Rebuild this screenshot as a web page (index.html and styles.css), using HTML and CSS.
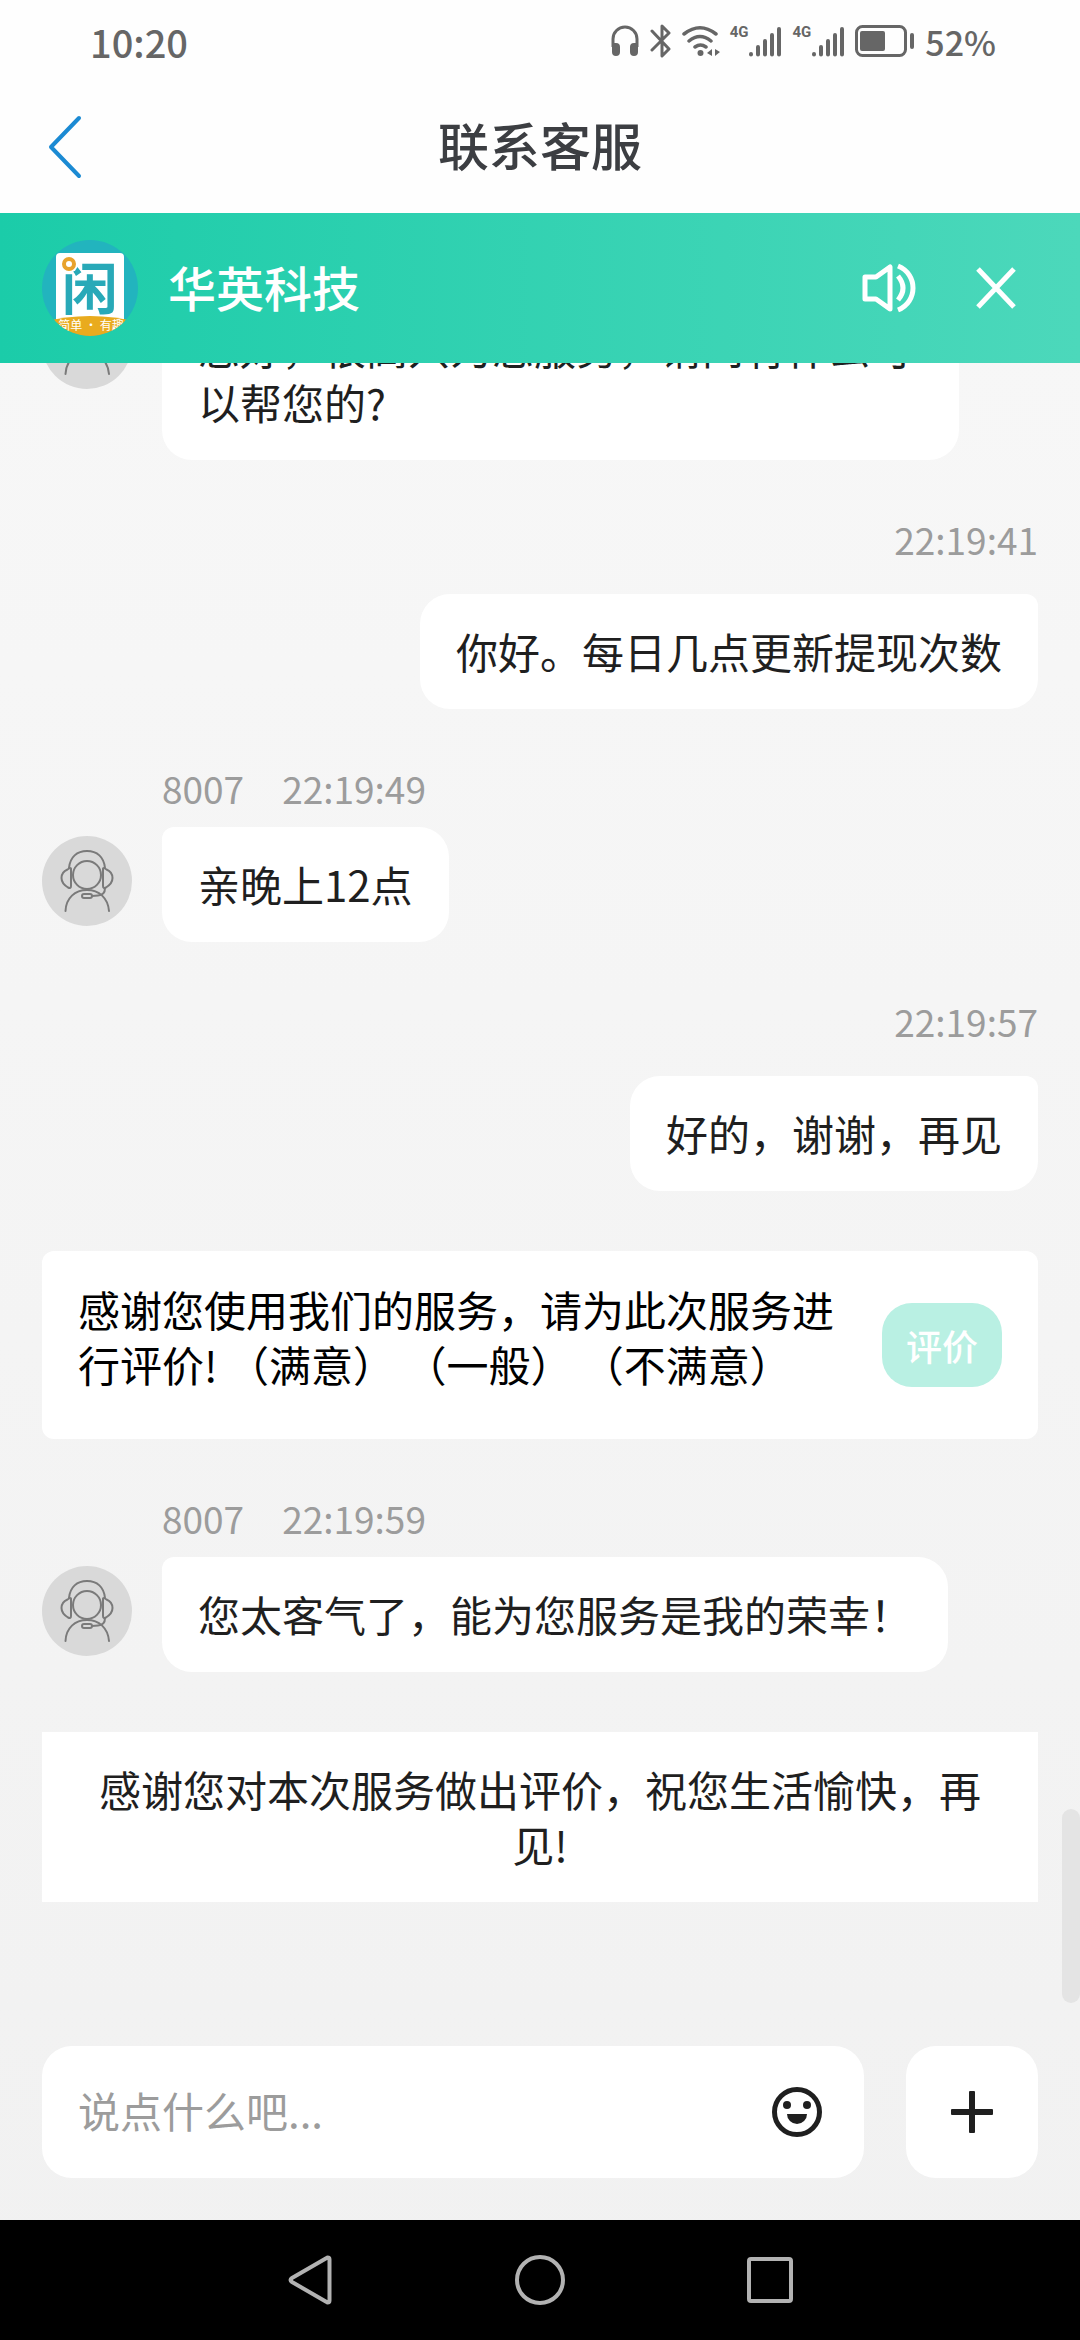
FILE: index.html
```html
<!DOCTYPE html>
<html lang="zh-CN">
<head>
<meta charset="utf-8">
<meta name="viewport" content="width=device-width, initial-scale=1">
<title>联系客服</title>
<link rel="stylesheet" href="styles.css">
</head>
<body>
<svg class="symbols" aria-hidden="true">
  <symbol id="agent" viewBox="0 0 90 90">
    <circle cx="45" cy="45" r="45" fill="#d9d9d9"/>
    <g fill="none" stroke="#7a7a7a" stroke-width="2" stroke-linecap="round" stroke-linejoin="round">
      <circle cx="45" cy="39" r="14"/>
      <path d="M27 32C28 21 35 15 45 15s17 6 18 17"/>
      <path d="M29 33v17q0 3-3 1.500C22 49 19.500 46 19.500 42S22 35 25.500 33.500Q29 31 29 33z"/>
      <path d="M61 33v17q0 3 3 1.500C68 49 70.500 46 70.500 42S68 35 64.500 33.500Q61 31 61 33z"/>
      <path d="M63 52q0 7-7 7.500L50 60"/>
      <rect x="40" y="58" width="10" height="4" rx="2"/>
      <path d="M23.500 75C24 62 33 54 45 54s21 8 22 21"/>
    </g>
  </symbol>
  <symbol id="bars" viewBox="0 0 34 32">
    <path d="M3 29v.5M10 22v7.500M17 16v13.500M24 10v19.500M31 4v25.500" fill="none" stroke="#666" stroke-width="4" stroke-linecap="round"/>
  </symbol>
</svg>

<div class="screen">
  <div class="status">
    <span class="clock">10:20</span>
    <div class="status-icons">
      <svg width="30" height="32" viewBox="0 0 28 32" fill="none" stroke="#666">
        <path d="M2 22V14a12 12 0 0 1 24 0v8" stroke-width="3"/>
        <path d="M1 18h4a4 4 0 0 1 4 4v5a4 4 0 0 1-8 0zM27 18h-4a4 4 0 0 0-4 4v5a4 4 0 0 0 8 0z" fill="#666" stroke="none"/>
      </svg>
      <svg width="22" height="34" viewBox="0 0 22 34" fill="none" stroke="#666" stroke-width="3" stroke-linecap="round" stroke-linejoin="round">
        <path d="M2 7l17 18-7 7V2l7 7L2 26"/>
      </svg>
      <svg width="38" height="32" viewBox="0 0 38 32" fill="none" stroke="#666" stroke-width="3.500" stroke-linecap="round">
        <path d="M2 9q16-12.500 32 0M7 16q11-9 22 0M13 22q5.500-4 11 0"/>
        <circle cx="18.500" cy="28" r="3" fill="#666" stroke="none"/>
        <path d="M30 24v7l-5-3zM33 24v7l5-4z" fill="#666" stroke="none"/>
      </svg>
      <div class="signal"><span>4G</span><svg width="34" height="32"><use href="#bars"/></svg></div>
      <div class="signal"><span>4G</span><svg width="34" height="32"><use href="#bars"/></svg></div>
      <svg width="60" height="32" viewBox="0 0 60 32">
        <rect x="1.500" y="1.500" width="49" height="29" rx="6" fill="none" stroke="#666" stroke-width="3"/>
        <rect x="5" y="6" width="25" height="20" rx="2" fill="#666"/>
        <rect x="55" y="8" width="4" height="16" rx="2" fill="#666"/>
      </svg>
      <span class="percent">52%</span>
    </div>
  </div>

  <header class="title-bar">
    <button class="icon-button" type="button" aria-label="返回">
      <svg width="34" height="64" viewBox="0 0 34 64" fill="none" stroke="#1b8ad3" stroke-width="4" stroke-linecap="round" stroke-linejoin="round"><path d="M31 3L3 32l28 29"/></svg>
    </button>
    <h1>联系客服</h1>
  </header>

  <section class="brand">
    <svg class="logo" width="96" height="96" viewBox="0 0 96 96" role="img" aria-label="闲">
      <clipPath id="disc"><circle cx="48" cy="48" r="48"/></clipPath>
      <g clip-path="url(#disc)">
        <rect width="96" height="96" fill="#22b4be"/>
        <rect x="14" y="13" width="68" height="70" rx="4" fill="#fff"/>
        <text class="logo-char" x="48" y="69" text-anchor="middle">闲</text>
        <circle cx="27" cy="24" r="9" fill="#fff"/>
        <circle cx="27" cy="24" r="5" fill="none" stroke="#e8a22c" stroke-width="4"/>
        <path d="M0 82Q48 70 96 82V96H0z" fill="#e9ab1e"/>
        <text class="logo-tag" x="49" y="90" text-anchor="middle">简单 · 有趣</text>
      </g>
    </svg>
    <h2>华英科技</h2>
    <button class="icon-button" type="button" aria-label="声音">
      <svg width="54" height="50" viewBox="0 0 54 50" fill="none" stroke="#fff" stroke-width="5" stroke-linejoin="round">
        <path d="M3 14h11L28 4v42L14 36H3z"/>
        <path d="M36 13q10 12 0 24M36 3c20 8 20 36 0 44"/>
      </svg>
    </button>
    <button class="icon-button" type="button" aria-label="关闭">
      <svg width="40" height="42" viewBox="0 0 40 42" fill="none" stroke="#fff" stroke-width="5"><path d="M2 2l36 38M38 2L2 40"/></svg>
    </button>
  </section>

  <main class="chat">
    <article class="message received">
      <p class="meta"><span>8007</span><time>22:19:37</time></p>
      <svg class="avatar" width="90" height="90"><use href="#agent"/></svg>
      <p class="bubble">您好，很高兴为您服务，请问有什么可以帮您的?</p>
    </article>
    <article class="message sent">
      <p class="meta"><time>22:19:41</time></p>
      <p class="bubble">你好。每日几点更新提现次数</p>
    </article>
    <article class="message received">
      <p class="meta"><span>8007</span><time>22:19:49</time></p>
      <svg class="avatar" width="90" height="90"><use href="#agent"/></svg>
      <p class="bubble">亲晚上12点</p>
    </article>
    <article class="message sent">
      <p class="meta"><time>22:19:57</time></p>
      <p class="bubble">好的，谢谢，再见</p>
    </article>
    <section class="rating">
      <p>感谢您使用我们的服务，请为此次服务进行评价! （满意） （一般） （不满意）</p>
      <button class="rate-button" type="button">评价</button>
    </section>
    <article class="message received">
      <p class="meta"><span>8007</span><time>22:19:59</time></p>
      <svg class="avatar" width="90" height="90"><use href="#agent"/></svg>
      <p class="bubble">您太客气了，能为您服务是我的荣幸！</p>
    </article>
    <p class="notice">感谢您对本次服务做出评价，祝您生活愉快，再见!</p>
    <div class="scroll-thumb"></div>
  </main>

  <form class="composer">
    <div class="field">
      <input type="text" placeholder="说点什么吧..." aria-label="说点什么吧">
      <button class="icon-button" type="button" aria-label="表情">
        <svg width="50" height="50" viewBox="0 0 50 50" fill="#1f1f1f">
          <circle cx="25" cy="25" r="22.500" fill="none" stroke="#1f1f1f" stroke-width="5"/>
          <circle cx="15" cy="18" r="4"/><circle cx="35" cy="18" r="4"/>
          <path d="M15 27h20a10 10 0 0 1-20 0z"/>
        </svg>
      </button>
    </div>
    <button class="add" type="button" aria-label="更多">
      <svg width="42" height="42" viewBox="0 0 42 42" fill="#1f1f1f"><rect x="18" width="6" height="42" rx="1"/><rect y="18" width="42" height="6" rx="1"/></svg>
    </button>
  </form>

  <nav class="system-nav">
    <button class="icon-button" type="button" aria-label="返回键"><svg width="44" height="50" viewBox="0 0 44 50"><path d="M39.500 2.500q2 0 2 2v41q0 2-2 2L4 27Q1 25 4 23z"/></svg></button>
    <button class="icon-button" type="button" aria-label="主屏幕"><svg width="50" height="50" viewBox="0 0 50 50"><circle cx="25" cy="25" r="23"/></svg></button>
    <button class="icon-button" type="button" aria-label="最近任务"><svg width="46" height="46" viewBox="0 0 46 46"><rect x="2" y="2" width="42" height="42" rx="2"/></svg></button>
  </nav>
</div>
</body>
</html>
```
FILE: styles.css
```css
* {
  box-sizing: border-box;
  margin: 0;
  padding: 0;
}

body {
  font-family: "Noto Sans CJK SC", "Noto Sans", sans-serif;
  font-size: 42px;
  line-height: 55px;
  color: #1f1f1f;
}

button,
input {
  border: 0;
  background: none;
  font: inherit;
  color: inherit;
}

svg {
  display: block;
  flex: none;
}

.symbols {
  position: absolute;
  width: 0;
  height: 0;
}

.screen {
  display: flex;
  flex-direction: column;
  height: 100vh;
  background: linear-gradient(#f8f8f8, #f1f1f1);
}

.icon-button {
  display: flex;
  align-items: center;
  justify-content: center;
}

/* Status bar */
.status {
  display: flex;
  align-items: center;
  justify-content: space-between;
  height: 80px;
  padding: 2px 84px 0 90px;
  background: #fefefe;
  color: #666;
  font-weight: 500;
}

.clock {
  font-size: 38px;
}

.percent {
  font-size: 34px;
}

.status-icons {
  display: flex;
  align-items: center;
  gap: 10px;
}

.signal {
  display: flex;
  align-items: flex-start;
}

.signal span {
  font: 700 15px/15px Roboto, sans-serif;
}

/* Page title */
.title-bar {
  display: grid;
  grid-template-columns: 1fr auto 1fr;
  align-items: center;
  height: 133px;
  padding: 0 48px;
  background: #fefefe;
}

.title-bar .icon-button {
  justify-self: start;
}

.title-bar h1 {
  padding-bottom: 4px;
  font-size: 51px;
  font-weight: 500;
  color: #3c3e42;
}

/* Brand bar */
.brand {
  display: flex;
  align-items: center;
  height: 150px;
  padding: 0 64px 0 42px;
  background: linear-gradient(90deg, #1bcca9, #4cd8bb);
  color: #fff;
}

.brand h2 {
  flex: 1;
  margin-left: 30px;
  padding-bottom: 4px;
  font-size: 48px;
  font-weight: 500;
}

.brand .icon-button + .icon-button {
  margin-left: 60px;
}

.logo-char {
  font-size: 56px;
  font-weight: 700;
  fill: #28a9b8;
}

.logo-tag {
  font-size: 12px;
  fill: #fff;
}

/* Conversation, pinned to its latest entry */
.chat {
  position: relative;
  display: flex;
  flex: 1;
  flex-direction: column;
  justify-content: flex-end;
  gap: 60px;
  min-height: 0;
  padding: 0 42px 102px;
  overflow: hidden;
}

.message {
  display: grid;
  justify-items: start;
}

.received {
  grid-template-columns: 90px 1fr;
  column-gap: 30px;
  row-gap: 20px;
}

.sent {
  justify-items: end;
  row-gap: 36px;
}

.meta {
  display: flex;
  gap: 38px;
  font-size: 37px;
  line-height: 38px;
  color: #9c9c9c;
}

.received .meta {
  grid-column: 2;
}

.avatar {
  margin-top: 9px;
}

.bubble {
  max-width: 797px;
  padding: 29px 36px 31px;
  border-radius: 30px;
  background: #fff;
}

.received .bubble {
  border-top-left-radius: 12px;
}

.sent .bubble {
  border-top-right-radius: 12px;
}

.rating {
  display: flex;
  align-items: center;
  justify-content: space-between;
  gap: 24px;
  padding: 30px 36px;
  border-radius: 12px;
  background: #fff;
  color: #000;
}

.rating p {
  margin-bottom: 18px;
}

.rate-button {
  flex: none;
  width: 120px;
  height: 84px;
  border-radius: 30px;
  background: #b9f0e3;
  color: #fff;
  font-size: 36px;
  font-weight: 500;
}

.notice {
  padding: 29px 36px 31px;
  background: #fff;
  text-align: center;
}

.scroll-thumb {
  position: absolute;
  right: 0;
  bottom: 1px;
  width: 18px;
  height: 194px;
  border-radius: 9px;
  background: #e4e4e4;
}

/* Message box */
.composer {
  display: flex;
  gap: 42px;
  padding: 42px;
}

.field {
  display: flex;
  flex: 1;
  align-items: center;
  height: 132px;
  padding: 0 42px 0 36px;
  border-radius: 30px;
  background: #fff;
}

.field input {
  flex: 1;
  min-width: 0;
  padding-bottom: 6px;
  outline: 0;
}

.field input::placeholder {
  color: #9c9c9c;
}

.add {
  display: flex;
  align-items: center;
  justify-content: center;
  width: 132px;
  border-radius: 30px;
  background: #fff;
}

/* System navigation */
.system-nav {
  display: flex;
  align-items: center;
  justify-content: center;
  gap: 134px;
  height: 120px;
  background: #000;
}

.system-nav .icon-button {
  width: 96px;
  height: 96px;
}

.system-nav svg {
  fill: none;
  stroke: #b2b2b2;
  stroke-width: 4px;
  stroke-linejoin: round;
}
```
